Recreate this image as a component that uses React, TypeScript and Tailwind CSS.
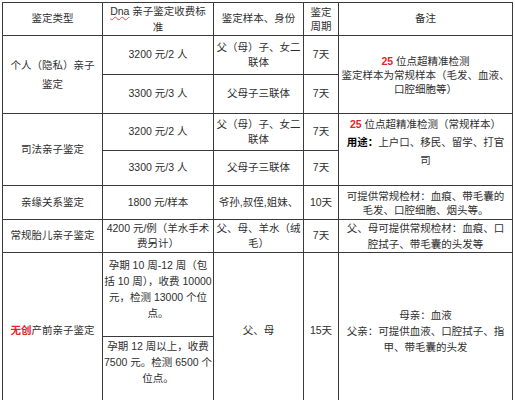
const td = "border border-[#3a3a3a] text-center align-middle p-0 whitespace-nowrap";
const red = "text-[#e0262a] font-bold";

const Lines = ({ lines, lh = "leading-[16px]" }: { lines: React.ReactNode[]; lh?: string }) => (
  <div className={lh}>
    {lines.map((l, i) => (
      <div key={i}>{l}</div>
    ))}
  </div>
);

export default function App() {
  return (
    <div
      className="w-[515px] h-[400px] overflow-hidden bg-white text-[#2e2e2e] text-[10.5px]"
      style={{ fontFamily: '"Liberation Sans", "Noto Sans CJK SC", sans-serif' }}
    >
      <table className="ml-[2px] mt-[2px] w-[510px] table-fixed border-collapse">
        <colgroup>
          <col className="w-[100px]" />
          <col className="w-[111px]" />
          <col className="w-[90px]" />
          <col className="w-[35px]" />
          <col className="w-[174px]" />
        </colgroup>
        <tbody>
          <tr className="h-[32px]">
            <td className={td}>鉴定类型</td>
            <td className={td}>
              <Lines
                lines={[
                  <>
                    <span className="underline decoration-wavy decoration-[#e05050] decoration-1">Dna</span> 亲子鉴定收费标
                  </>,
                  "准",
                ]}
              />
            </td>
            <td className={td}>鉴定样本、身份</td>
            <td className={td}>
              <Lines lines={["鉴定", "周期"]} lh="leading-[14px]" />
            </td>
            <td className={td}>备注</td>
          </tr>

          <tr className="h-[39px]">
            <td className={td} rowSpan={2}>
              <Lines lines={["个人（隐私）亲子", "鉴定"]} lh="leading-[19px]" />
            </td>
            <td className={td}>3200 元/2 人</td>
            <td className={td}>
              <Lines lines={["父（母）子、女二", "联体"]} lh="leading-[15px]" />
            </td>
            <td className={td}>7天</td>
            <td className={td} rowSpan={2}>
              <Lines
                lh="leading-[14px]"
                lines={[
                  <>
                    <span className={red}>25</span> 位点超精准检测
                  </>,
                  "鉴定样本为常规样本（毛发、血液、",
                  "口腔细胞等）",
                ]}
              />
            </td>
          </tr>
          <tr className="h-[39px]">
            <td className={td}>3300 元/3 人</td>
            <td className={td}>父母子三联体</td>
            <td className={td}>7天</td>
          </tr>

          <tr className="h-[37px]">
            <td className={td} rowSpan={2}>
              司法亲子鉴定
            </td>
            <td className={td}>3200 元/2 人</td>
            <td className={td}>
              <Lines lines={["父（母）子、女二", "联体"]} lh="leading-[15px]" />
            </td>
            <td className={td}>7天</td>
            <td className={`${td} !align-top pt-[1px]`} rowSpan={2}>
              <Lines
                lh="leading-[18px]"
                lines={[
                  <>
                    <span className={red}>25</span> 位点超精准检测（常规样本）
                  </>,
                  <>
                    <span className="font-bold text-black">用途：</span>上户口、移民、留学、打官
                  </>,
                  "司",
                ]}
              />
            </td>
          </tr>
          <tr className="h-[35px]">
            <td className={td}>3300 元/3 人</td>
            <td className={td}>父母子三联体</td>
            <td className={td}>7天</td>
          </tr>

          <tr className="h-[34px]">
            <td className={td}>亲缘关系鉴定</td>
            <td className={td}>1800 元/样本</td>
            <td className={td}>爷孙,叔侄,姐妹、</td>
            <td className={td}>10天</td>
            <td className={td}>
              <Lines lh="leading-[14px]" lines={["可提供常规检材：血痕、带毛囊的", "毛发、口腔细胞、烟头等。"]} />
            </td>
          </tr>

          <tr className="h-[32px]">
            <td className={td}>常规胎儿亲子鉴定</td>
            <td className={td}>
              <Lines lh="leading-[15px]" lines={["4200 元/例（羊水手术", "费另计）"]} />
            </td>
            <td className={td}>
              <Lines lh="leading-[15px]" lines={["父、母、羊水（绒", "毛）"]} />
            </td>
            <td className={td}>7天</td>
            <td className={td}>
              <Lines lh="leading-[16px]" lines={["父、母可提供常规检材：血痕、口", "腔拭子、带毛囊的头发等"]} />
            </td>
          </tr>

          <tr className="h-[84px]">
            <td className={td} rowSpan={2}>
              <span className="text-[#e0262a] font-semibold">无创</span>产前亲子鉴定
            </td>
            <td className={`${td} !align-top pt-[4px]`}>
              <Lines
                lh="leading-[16px]"
                lines={["孕期 10 周-12 周（包", "括 10 周），收费 10000", "元，检测 13000 个位", "点。"]}
              />
            </td>
            <td className={td} rowSpan={2}>
              父、母
            </td>
            <td className={td} rowSpan={2}>
              15天
            </td>
            <td className={td} rowSpan={2}>
              <Lines
                lh="leading-[16px]"
                lines={["母亲：血液", "父亲：可提供血液、口腔拭子、指", "甲、带毛囊的头发"]}
              />
            </td>
          </tr>
          <tr className="h-[72px]">
            <td className={`${td} !align-top pt-[1px]`}>
              <Lines lh="leading-[16px]" lines={["孕期 12 周以上，收费", "7500 元。检测 6500 个", "位点。"]} />
            </td>
          </tr>
        </tbody>
      </table>
    </div>
  );
}
